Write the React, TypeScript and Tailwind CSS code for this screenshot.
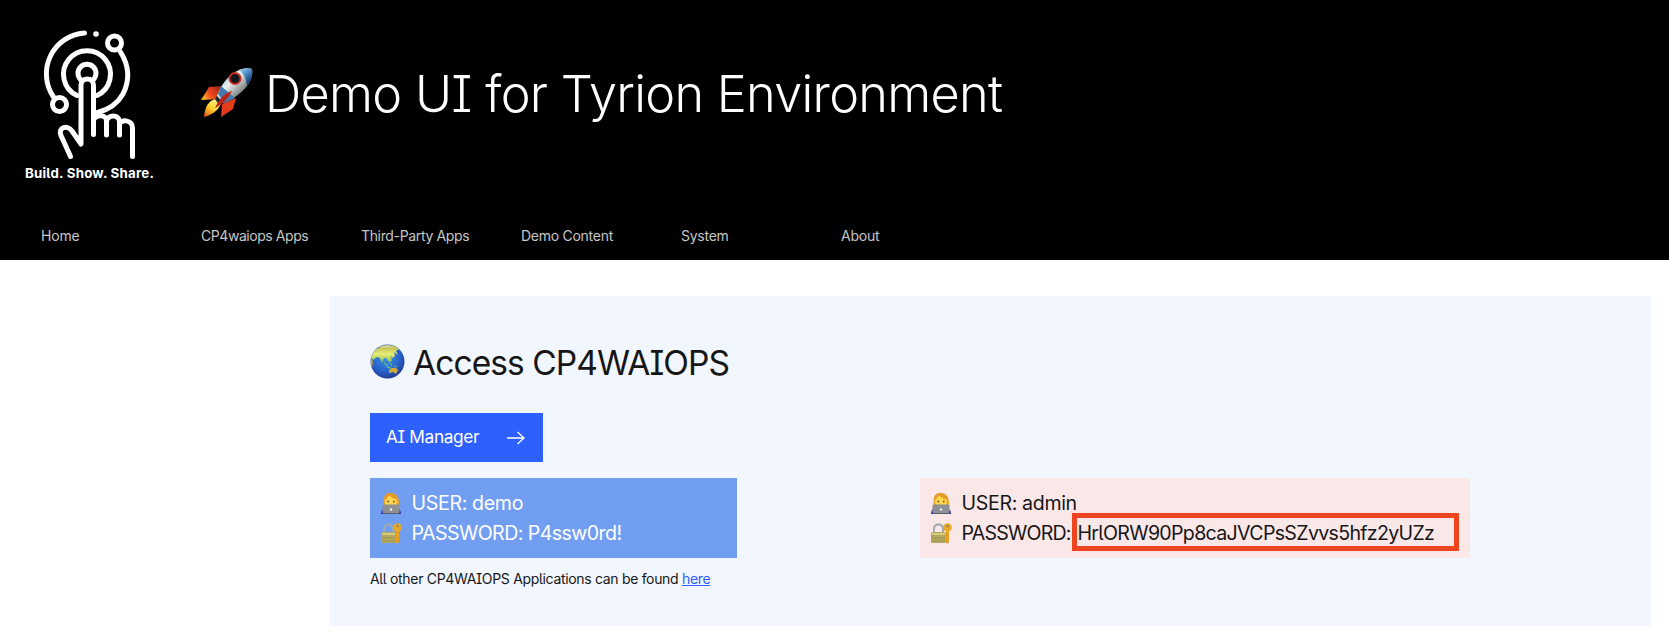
import React from "react";

const navItems = [
  { label: "Home", tracking: "tracking-[-0.2px]" },
  { label: "CP4waiops Apps", tracking: "tracking-[-0.44px]" },
  { label: "Third-Party Apps", tracking: "tracking-[-0.35px]" },
  { label: "Demo Content", tracking: "tracking-[-0.27px]" },
  { label: "System", tracking: "tracking-[-0.25px]" },
  { label: "About", tracking: "tracking-[-0.2px]" },
];

function Logo() {
  return (
    <svg width="100" height="134" viewBox="0 0 100 134" fill="none" stroke="#fff" strokeWidth="5" strokeLinecap="round" strokeLinejoin="round">
      <path d="M44.500 5A41 41 0 0 0 13.500 69" />
      <path d="M80.500 24C90 39 90 52 83 66Q75 80 57.500 84.500" />
      <circle cx="56" cy="6" r="2.800" fill="#fff" stroke="none" />
      <circle cx="74.500" cy="15" r="7" />
      <circle cx="19.500" cy="76.500" r="7" />
      <path d="M37 67.500A23.500 23.500 0 1 1 57 67.500" />
      <path d="M40.500 51.500A9 9 0 1 1 53.500 51.500" />
      <path d="M30.500 128.500L21 107.500C17.500 99 28 96.500 32 103L41 116V57C41 49 53.500 49 53.500 57V106.500" />
      <path d="M53.500 92C56 86.500 66.500 86 66.500 93V107V94C67 86 79.500 86 79.500 94V107V97C80 91 92.500 91 92.500 100V128.500" />
    </svg>
  );
}

function Rocket() {
  return (
    <svg className="-mt-[3px]" width="52" height="49" viewBox="0 0 52 49">
      <defs>
        <linearGradient id="hull" x1="18" y1="8" x2="38" y2="28" gradientUnits="userSpaceOnUse">
          <stop stopColor="#8fb6d3" /><stop offset=".45" stopColor="#f0f1ee" /><stop offset="1" stopColor="#777b7c" />
        </linearGradient>
        <linearGradient id="nose" x1="38" y1="1" x2="49" y2="13" gradientUnits="userSpaceOnUse">
          <stop stopColor="#a6d4ee" /><stop offset=".5" stopColor="#4f8fc9" /><stop offset="1" stopColor="#163d78" />
        </linearGradient>
        <linearGradient id="flame" x1="17" y1="31" x2="4" y2="49" gradientUnits="userSpaceOnUse">
          <stop stopColor="#fff4a0" /><stop offset=".5" stopColor="#ffd52b" /><stop offset="1" stopColor="#e94e0f" />
        </linearGradient>
        <linearGradient id="fin" x1="20" y1="17" x2="2" y2="32" gradientUnits="userSpaceOnUse">
          <stop stopColor="#991d12" /><stop offset=".6" stopColor="#ef4a1e" /><stop offset="1" stopColor="#ffc031" />
        </linearGradient>
      </defs>
      <path d="M22 18L8 19L0 32L17 31Z" fill="url(#fin)" />
      <path d="M35 30L32 41L20 49L21 36Z" fill="#e43c1b" />
      <path d="M14 31C6 34 4 40 3 49C10 47 16 44 20 36Z" fill="url(#flame)" />
      <path d="M16 28C20 17 27 7 38 2C43 0 48 0 51 1C52 7 50 13 46 18C39 27 30 32 22 35Z" fill="url(#hull)" />
      <path d="M17 26L20 18L34 30L24 35Z" fill="#457bb0" />
      <path d="M38 2C43 0 48 0 51 1C52 7 50 13 46 18C45 10 43 6 38 2Z" fill="url(#nose)" />
      <circle cx="34" cy="10.500" r="5.500" fill="#0c171e" stroke="#c52c27" strokeWidth="2" />
      <path d="M14 31L16 28L22 35L18 37Z" fill="#1c2c3b" />
      <path d="M31 23C23 25 18 31 14 40C22 36 27 31 31 23Z" fill="#b92519" />
    </svg>
  );
}

function Globe() {
  return (
    <svg className="-mt-[3px]" width="35" height="35" viewBox="0 0 35 35">
      <defs>
        <radialGradient id="sea" cx=".45" cy=".38" r=".65">
          <stop stopColor="#3796e5" /><stop offset=".65" stopColor="#2760c9" /><stop offset="1" stopColor="#253790" />
        </radialGradient>
        <linearGradient id="land" x1="0" y1="0" x2="0" y2="1">
          <stop stopColor="#b9ad49" /><stop offset=".5" stopColor="#e6ec78" /><stop offset="1" stopColor="#83b94c" />
        </linearGradient>
      </defs>
      <circle cx="17.500" cy="17.500" r="17" fill="url(#sea)" />
      <path d="M3 9Q9 1 17 1Q25 1 29 5L26 7L28 11L24 8L25 12L23 14L21 12L22 17L19 18L16 14L14 14L12 19L10 14L7 13L3 16L1 14Z" fill="url(#land)" />
      <path d="M1 15L3 17L2 24Q0 19 1 15Z" fill="#c6a638" />
      <path d="M14 19L18 22M20 19L22 22M24 22L27 23M17 23L21 24" stroke="#75b58c" strokeWidth="1.300" />
      <path d="M19 26L22 24L26 24L28 26L26 30L23 28L19 29Z" fill="#d0a93a" />
      <path d="M9 3Q17 0 25 3Q17 4 9 3Z" fill="#d8d6a4" />
    </svg>
  );
}

function Technologist() {
  return (
    <svg width="20" height="21" viewBox="0 0 20 21">
      <path d="M0 21Q0 16 4 15H16Q20 16 20 21Z" fill="#3037ae" />
      <path d="M3 13Q1 1 8 0Q18-1 18 10Q18 13 16 14Z" fill="#e9a32e" />
      <ellipse cx="10" cy="8.500" rx="6" ry="6" fill="#ffd54b" />
      <path d="M3 7Q6 6 8 2.500Q12 6 17 7Q15 0 9 0Q3 1 3 7Z" fill="#e39a2b" />
      <path d="M6.500 8.500H8M12 8.500H13.500" stroke="#503c23" strokeWidth="1.500" />
      <rect x="1.500" y="11.500" width="17" height="8.500" rx="1" fill="#8d9095" />
      <path d="M2 20H18V21H2Z" fill="#5a5d68" />
      <circle cx="10" cy="16.500" r="1.200" fill="#eee" />
    </svg>
  );
}

function LockKey() {
  return (
    <svg width="21" height="21" viewBox="0 0 21 21">
      <path d="M3 10V6Q3 1.500 7.500 1.500Q12 1.500 12 6V10" fill="none" stroke="#9eabb0" strokeWidth="2" />
      <rect y="9" width="15" height="11" rx="1.500" fill="#b3aa60" />
      <path d="M1 10H14V12H1Z" fill="#d6cc7c" />
      <path d="M1 15H14M1 18H14" stroke="#96904e" strokeWidth=".8" />
      <path d="M15 7H18V19L16.500 21L15 19.500V18L13.500 17V16L15 15Z" fill="#e5a022" />
      <circle cx="16.500" cy="4.500" r="4.300" fill="#e9a92a" />
      <circle cx="16.500" cy="3" r="1.300" fill="#98845a" />
    </svg>
  );
}

function Credentials({ user, children }: { user: string; children: React.ReactNode }) {
  return (
    <div className="pt-[10px] pl-[11px] text-[19.6px] leading-[30px]">
      <div className="flex items-center"><span className="w-[30.5px] shrink-0"><Technologist /></span><span className="tracking-[-0.35px]">USER: {user}</span></div>
      <div className="flex items-center"><span className="w-[30.5px] shrink-0"><LockKey /></span>{children}</div>
    </div>
  );
}

export default function App() {
  return (
    <div className="min-h-[634px] bg-white font-['Inter','Liberation_Sans',sans-serif] text-[#161616] [font-feature-settings:'cv08','cv05'] whitespace-nowrap">
      <header className="flex h-[260px] flex-col bg-black text-white">
        <div className="flex h-[212px]">
          <div className="w-[201px] pt-7 pl-[25px]">
            <div className="pl-[15px]"><Logo /></div>
            <div className="mt-[1px] text-[13.3px] leading-5 font-bold tracking-[0.23px]">Build. Show. Share.</div>
          </div>
          <h1 className="mt-[62px] flex h-16 items-center text-[50.4px] font-light">
            <span className="w-16"><Rocket /></span>
            <span className="tracking-[-0.7px]">Demo UI for Tyrion Environment</span>
          </h1>
        </div>
        <nav className="flex pl-[41px] text-[14px] leading-[48px] text-[#c6c6c6]">
          {navItems.map(({ label, tracking }) => <a key={label} className={`w-[160px] ${tracking}`}>{label}</a>)}
        </nav>
      </header>
      <main className="mt-9 ml-[330px] h-[330px] w-[1321px] bg-[#f2f7ff] pt-[42px] pl-10">
        <h2 className="flex h-[50px] items-center text-[33.5px]"><span className="w-[43px]"><Globe /></span><span className="tracking-[-0.92px]">Access CP4WAIOPS</span></h2>
        <button className="mt-[25px] flex h-[49px] w-[173px] items-center justify-between bg-[#2d60ff] pr-[18px] pl-4 text-[17.3px] text-white">
          <span className="pb-[2px] tracking-[-0.36px]">AI Manager</span>
          <svg width="18" height="14" viewBox="0 0 18 14" fill="none" stroke="currentColor" strokeWidth="1.300"><path d="M0 7H17M10.500 1L17 7L10.500 13" /></svg>
        </button>
        <div className="mt-4 flex">
          <div className="h-20 w-[367px] bg-[#729ef2] text-white">
            <Credentials user="demo"><span className="tracking-[-0.57px]">PASSWORD: P4ssw0rd!</span></Credentials>
          </div>
          <div className="ml-[183px] h-20 w-[550px] bg-[#fae7e8]">
            <Credentials user="admin">
              <span className="w-[116px] tracking-[-0.8px]">PASSWORD:</span>
              <span className="relative tracking-[-0.69px]">HrlORW90Pp8caJVCPsSZvvs5hfz2yUZz
                <span className="absolute -top-[5px] -left-[6px] h-[38px] w-[387px] border-[5px] border-[#ed451f]" />
              </span>
            </Credentials>
          </div>
        </div>
        <p className="mt-[9px] text-[14px] leading-6 tracking-[-0.32px]">All other CP4WAIOPS Applications can be found <a className="text-[#2d60ff] underline">here</a></p>
      </main>
    </div>
  );
}
